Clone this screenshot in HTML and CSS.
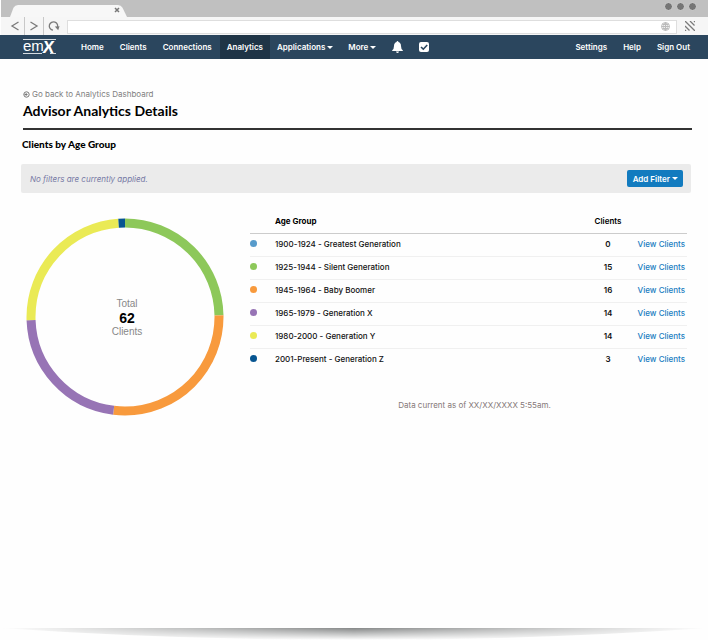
FILE: index.html
```html
<!DOCTYPE html>
<html lang="en">
<head>
<meta charset="utf-8">
<title>Advisor Analytics Details</title>
<meta name="viewport" content="width=device-width, initial-scale=1">
<link rel="stylesheet" href="styles.css">
</head>
<body>
<div class="browser">
  <div class="tabs">
    <div class="tab">
      <svg class="tab-shape" viewBox="0 0 117 13" preserveAspectRatio="none" aria-hidden="true"><path d="M0 13 3.500 3Q5 0 8 0H108Q111 0 112.500 3L117 13Z"/></svg>
      <button class="tab-close" aria-label="Close tab"><svg width="6" height="6" viewBox="0 0 6 6"><path d="M1 1 5 5M5 1 1 5"/></svg></button>
    </div>
    <div class="lights"><span></span><span></span><span></span></div>
  </div>
  <div class="toolbar">
    <button class="tool" aria-label="Back"><svg width="10" height="12" viewBox="0 0 10 12"><path d="M8.500 2 2 6 8.500 10"/></svg></button>
    <button class="tool" aria-label="Forward"><svg width="10" height="12" viewBox="0 0 10 12"><path d="M1.500 2 8 6 1.500 10"/></svg></button>
    <button class="tool plain" aria-label="Reload"><svg width="12" height="12" viewBox="0 0 12 12"><path d="M5 10.200A4.200 4.200 0 1 1 9.200 8"/><path class="head" d="M6.800 6.500 11.500 6.200 10.200 10.200Z"/></svg></button>
    <div class="address">
      <input type="text" aria-label="Address">
      <svg width="9" height="9" viewBox="0 0 9 9" aria-hidden="true"><path d="M4.500.500A4 4 0 1 0 4.500 8.500 4 4 0 1 0 4.500.500M.500 4.500H8.500M4.500.500V8.500M4.500.500C2 2.500 2 6.500 4.500 8.500 7 6.500 7 2.500 4.500.500M1.500 2.500H7.500M1.500 6.500H7.500"/></svg>
    </div>
    <button class="tool plain resize" aria-label="Resize"><svg width="10" height="10" viewBox="0 0 10 10"><path d="M0 0 10 10M5 0 9.500 4.500M0 5 4.500 9.500M9 0 10 1M0 9 1 10"/></svg></button>
  </div>
</div>

<nav class="nav">
  <a class="logo" href="#" aria-label="emX"><svg width="34" height="20" viewBox="0 0 34 20"><path d="M0 2.500H33M0 16.500H19M27 16.500H33"/><text class="em" x="0" y="14">em</text><text class="ex" x="20" y="16">X</text></svg></a>
  <a class="item" href="#">Home</a>
  <a class="item" href="#">Clients</a>
  <a class="item" href="#">Connections</a>
  <a class="item active" href="#">Analytics</a>
  <a class="item" href="#">Applications<i class="caret"></i></a>
  <a class="item" href="#">More<i class="caret"></i></a>
  <a class="item icon" href="#" aria-label="Notifications"><svg width="11" height="12" viewBox="0 0 11 12"><path d="M5.500 0Q6.400 0 6.400 1 9 1.800 9 5 9 8 10.800 9.200V10H.200V9.200Q2 8 2 5 2 1.800 4.600 1 4.600 0 5.500 0ZM4 10.500H7Q6.600 12 5.500 12 4.400 12 4 10.500Z"/></svg></a>
  <a class="item icon" href="#" aria-label="Tasks"><svg width="10" height="10" viewBox="0 0 10 10"><rect width="10" height="10" rx="2"/><path class="tick" d="M2 5 4.300 7.200 8.200 3"/></svg></a>
  <div class="account">
    <a class="item" href="#">Settings</a>
    <a class="item" href="#">Help</a>
    <a class="item" href="#">Sign Out</a>
  </div>
</nav>

<main class="page">
  <header class="heading">
    <a class="back" href="#"><svg width="7" height="7" viewBox="0 0 7 7" aria-hidden="true"><circle cx="3.500" cy="3.500" r="2.700"/><path d="M4.500 3.500H1.500M3.200 2.200V4.800"/></svg>Go back to Analytics Dashboard</a>
    <h1>Advisor Analytics Details</h1>
  </header>
  <h2>Clients by Age Group</h2>
  <section class="filters">
    <em>No filters are currently applied.</em>
    <button class="add">Add Filter<i class="caret"></i></button>
  </section>
  <section class="report">
    <div class="chart">
      <svg viewBox="0 0 200 200" role="img" aria-label="Clients by age group">
        <g transform="rotate(-90 100 100)">
          <circle class="green" cx="100" cy="100" r="94" pathLength="360" stroke-dasharray="89 271"/>
          <circle class="orange" cx="100" cy="100" r="94" pathLength="360" stroke-dasharray="98 262" stroke-dashoffset="-89"/>
          <circle class="purple" cx="100" cy="100" r="94" pathLength="360" stroke-dasharray="81 279" stroke-dashoffset="-187"/>
          <circle class="yellow" cx="100" cy="100" r="94" pathLength="360" stroke-dasharray="88 272" stroke-dashoffset="-268"/>
          <circle class="navy" cx="100" cy="100" r="94" pathLength="360" stroke-dasharray="4 356" stroke-dashoffset="-356"/>
        </g>
      </svg>
      <div class="total"><span>Total</span><strong>62</strong><span>Clients</span></div>
    </div>
    <div class="detail">
      <table>
        <thead><tr><th class="key"></th><th>Age Group</th><th class="count">Clients</th><th class="view"></th></tr></thead>
        <tbody>
          <tr><td><i class="dot blue"></i></td><td>1900-1924 - Greatest Generation</td><td class="count">0</td><td class="view"><a href="#">View Clients</a></td></tr>
          <tr><td><i class="dot green"></i></td><td>1925-1944 - Silent Generation</td><td class="count">15</td><td class="view"><a href="#">View Clients</a></td></tr>
          <tr><td><i class="dot orange"></i></td><td>1945-1964 - Baby Boomer</td><td class="count">16</td><td class="view"><a href="#">View Clients</a></td></tr>
          <tr><td><i class="dot purple"></i></td><td>1965-1979 - Generation X</td><td class="count">14</td><td class="view"><a href="#">View Clients</a></td></tr>
          <tr><td><i class="dot yellow"></i></td><td>1980-2000 - Generation Y</td><td class="count">14</td><td class="view"><a href="#">View Clients</a></td></tr>
          <tr><td><i class="dot navy"></i></td><td>2001-Present - Generation Z</td><td class="count">3</td><td class="view"><a href="#">View Clients</a></td></tr>
        </tbody>
      </table>
      <p class="asof">Data current as of XX/XX/XXXX 5:55am.</p>
    </div>
  </section>
</main>
<svg class="shadow" viewBox="0 0 708 12" preserveAspectRatio="none" aria-hidden="true">
  <defs>
    <linearGradient id="across"><stop offset="0" stop-color="#000"/><stop offset=".5" stop-color="#fff"/><stop offset="1" stop-color="#000"/></linearGradient>
    <linearGradient id="down" x2="0" y2="1"><stop offset="0" stop-color="#858787"/><stop offset="1" stop-color="#fff"/></linearGradient>
    <mask id="fade"><rect width="708" height="12" fill="url(#across)"/></mask>
  </defs>
  <path mask="url(#fade)" fill="url(#down)" d="M0 0H708Q530 12 354 12 178 12 0 0Z"/>
</svg>
</body>
</html>
```
FILE: styles.css
```css
* { box-sizing: border-box; }
body {
  margin: 0;
  min-height: 100vh;
  display: flex;
  flex-direction: column;
  background: #fefefe;
  color: #111;
  font: 500 8px/12px Inter, "Liberation Sans", sans-serif;
}
a { color: inherit; text-decoration: none; }
button { border: 0; padding: 0; background: none; font: inherit; cursor: pointer; }
svg { display: block; }

.browser { padding-left: 1px; }
.tabs {
  display: flex;
  justify-content: space-between;
  height: 17px;
  padding: 0 11px 0 9px;
  background: #c0c0c0;
}
.tab {
  display: flex;
  justify-content: flex-end;
  align-self: flex-end;
  align-items: center;
  width: 117px;
  height: 12px;
  position: relative;
  padding: 0 7px 2px 0;
}
.tab-shape { position: absolute; inset: 0; width: 100%; height: 100%; fill: #f7f7f7; }
.tab-close { position: relative; }
.tab-close path { stroke: #777; stroke-width: 1.500; }
.lights { display: flex; gap: 3px; padding-top: 2px; }
.lights span { width: 9px; height: 9px; border-radius: 50%; background: #757575; border: 1px solid #d2d2d2; }
.toolbar {
  display: flex;
  align-items: center;
  height: 18px;
  padding-right: 13px;
  background: #f6f6f6;
}
.tool {
  display: flex;
  align-items: center;
  justify-content: center;
  align-self: stretch;
  width: 24px;
  padding-left: 4px;
  border-right: 1px solid #c8c8c8;
}
.tool:nth-child(2) { width: 19px; padding: 0; }
.tool.plain { border: 0; width: 19px; padding: 0; }
.tool path { fill: none; stroke: #7a7a7a; stroke-width: 1.300; }
.tool .head { fill: #7a7a7a; stroke: none; }
.tool.plain.resize { width: 10px; }
.address {
  display: flex;
  align-items: center;
  flex: 1;
  height: 14px;
  margin: 2px 8px 0 4px;
  padding-right: 6px;
  border: 1px solid #dedede;
  background: #fff;
}
.address input { flex: 1; min-width: 0; height: 10px; border: 0; padding: 0 4px; outline: 0; font: inherit; }
.address svg { margin-bottom: 2px; }
.address path { fill: none; stroke: #bbb; }

.nav {
  display: flex;
  align-items: stretch;
  height: 24px;
  padding: 0 10px 0 23px;
  background: #2b465e;
  color: #fff;
  font-weight: 600;
}
.logo { display: flex; align-items: center; margin-right: 16px; }
.logo svg { overflow: visible; }
.logo path { stroke: #d5dce2; }
.logo text { fill: #fff; }
.em { font: 15px "Liberation Sans", sans-serif; }
.ex { font: italic 900 17px Lato, sans-serif; }
.item { display: flex; align-items: center; padding: 0 8px; }
.item.active { background: #1f3446; }
.item.active, .item.active + .item { padding: 0 7px; }
.item.icon svg { fill: #fff; }
.item.icon .tick { fill: none; stroke: #2b465e; stroke-width: 1.600; }
.caret {
  margin-left: 2px;
  border: 3px solid transparent;
  border-top-color: currentColor;
  border-bottom: 0;
}
.account { display: flex; margin-left: auto; }

.page { flex: 1; padding: 29px 16px 0 21px; }
.heading { margin-left: 2px; border-bottom: 2px solid #333; padding-bottom: 7px; }
.back { display: flex; align-items: center; gap: 2px; color: #808080; font-weight: 400; }
.back svg { fill: none; stroke: #777; }
h1 { margin: 1px 0 0; font: 700 14px/20px Lato, sans-serif; color: #000; }
h2 { margin: 7px 1px 13px; font: 900 10px/14px Lato, sans-serif; color: #000; }
.filters {
  display: flex;
  align-items: center;
  justify-content: space-between;
  height: 29px;
  margin-right: 1px;
  padding: 0 8px 0 9px;
  border-radius: 2px;
  background: #ebebeb;
}
.filters em { color: #777aa5; font-weight: 400; }
.add {
  display: flex;
  align-items: center;
  height: 17px;
  padding: 0 5px 0 6px;
  border-radius: 2px;
  background: #127bbf;
  color: #fff;
  font-weight: 600;
}
.report { display: flex; gap: 25px; padding: 17px 5px 0 4px; }
.chart { position: relative; flex: none; width: 200px; height: 200px; margin-top: 7px; }
.chart circle { fill: none; stroke-width: 9; }
.total {
  position: absolute;
  inset: 0;
  display: flex;
  flex-direction: column;
  align-items: center;
  justify-content: center;
  padding: 2px 0 0 4px;
  color: #888;
  font: 10px/14px "Liberation Sans", sans-serif;
}
.total strong { color: #000; font-size: 14px; }
.detail { flex: 1; }
table { width: 100%; border-collapse: collapse; table-layout: fixed; }
th, td { height: 23px; padding: 0; text-align: left; vertical-align: middle; }
th { border-bottom: 1px solid #ccc; color: #000; font-weight: 700; }
td { padding-bottom: 2px; }
tr + tr td { border-top: 1px solid #f0f0f0; }
.key { width: 25px; }
.count { width: 50px; text-align: center; font-weight: 600; }
.view { width: 54px; padding-right: 2px; text-align: right; }
.view a { color: #1a7dc1; }
.dot { display: block; width: 7px; height: 7px; border-radius: 50%; background: currentColor; }
.blue { color: #579bcb; }
.green { color: #8dc85a; stroke: #8dc85a; }
.orange { color: #f89a3d; stroke: #f89a3d; }
.purple { color: #9774b5; stroke: #9774b5; }
.yellow { color: #eaea55; stroke: #eaea55; }
.navy { color: #075591; stroke: #075591; }
.asof { margin: 28px 0 0; padding-left: 12px; text-align: center; color: #857878; font-weight: 400; }
.shadow { width: 100%; height: 12px; }
```
